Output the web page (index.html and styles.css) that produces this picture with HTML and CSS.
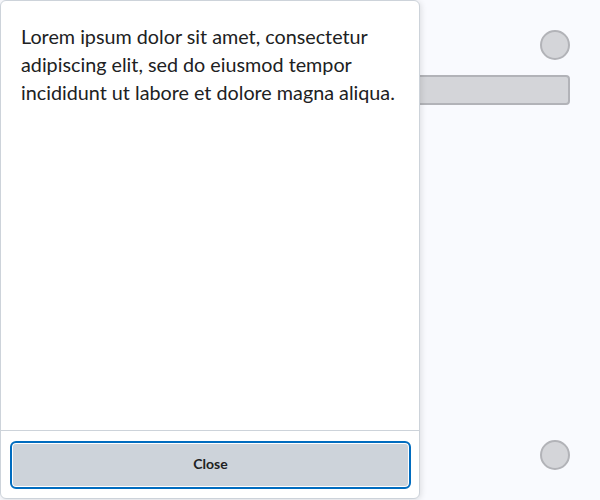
FILE: index.html
```html
<!DOCTYPE html>
<html>
<head>
<meta charset="utf-8">
<link rel="stylesheet" href="styles.css">
</head>
<body>
<div class="page">
  <div class="row-end"><span class="dot"></span></div>
  <div class="bar"></div>
  <div class="spacer"></div>
  <div class="row-end"><span class="dot"></span></div>
</div>
<div class="dialog" role="dialog">
  <div class="dialog-body">
    <p class="text">Lorem ipsum dolor sit amet, consectetur adipiscing elit, sed do eiusmod tempor incididunt ut labore et dolore magna aliqua.</p>
  </div>
  <div class="dialog-footer">
    <button class="btn">Close</button>
  </div>
</div>
</body>
</html>
```
FILE: styles.css
```css
html, body {
  margin: 0;
  padding: 0;
  height: 100%;
}
body {
  background: #f9fafe;
  font-family: Lato, "Noto Sans", sans-serif;
  color: #202122;
  overflow: hidden;
}
.page {
  box-sizing: border-box;
  height: 100vh;
  padding: 30px 30px 30px 30px;
  display: flex;
  flex-direction: column;
}
.row-end {
  display: flex;
  justify-content: flex-end;
}
.dot {
  box-sizing: border-box;
  width: 30px;
  height: 30px;
  border-radius: 50%;
  background: #d4d5d9;
  border: 2px solid #b2b3b8;
}
.bar {
  box-sizing: border-box;
  margin-top: 15px;
  height: 30px;
  border-radius: 4px;
  background: #d4d5d9;
  border: 2px solid #b2b3b8;
}
.spacer {
  flex: 1;
}
.dialog {
  position: absolute;
  left: 0;
  top: 0;
  box-sizing: border-box;
  width: 420px;
  height: 499px;
  background: #fff;
  border: 1px solid #cdd3da;
  border-radius: 6px;
  box-shadow: 1px 1px 6px rgba(0, 0, 0, 0.12);
  display: flex;
  flex-direction: column;
}
.dialog-body {
  flex: 1;
  padding: 22px 20px 20px;
}
.text {
  margin: 0;
  font-size: 19.75px;
  line-height: 28px;
}
.dialog-footer {
  border-top: 1px solid #cdd3da;
  padding: 10px 8px 9px 9px;
}
.btn {
  display: block;
  box-sizing: border-box;
  width: 100%;
  height: 48px;
  padding: 0 0 3px;
  background: #cdd3da;
  border: 2px solid #006cbf;
  box-shadow: inset 0 0 0 1px #fff;
  border-radius: 6px;
  font-family: Lato, "Noto Sans", sans-serif;
  font-size: 14px;
  line-height: 20px;
  font-weight: 700;
  color: #202122;
  cursor: pointer;
}
```
